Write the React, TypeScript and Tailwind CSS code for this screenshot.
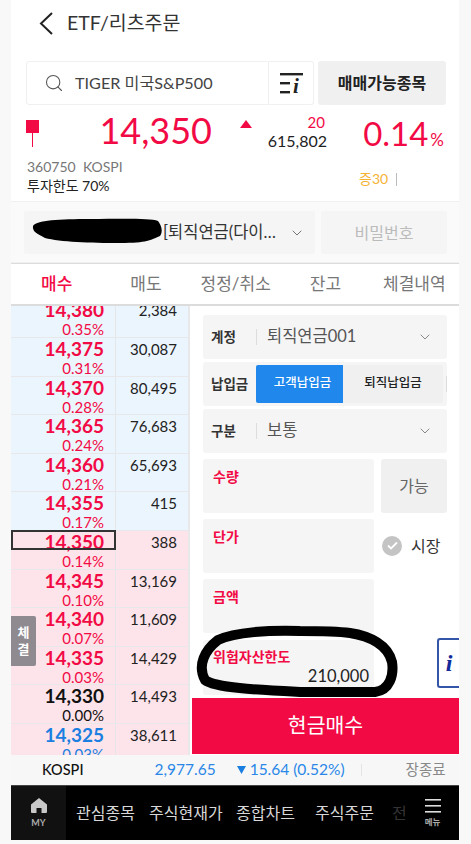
import React from "react";
import { ChevronDown, Search } from "lucide-react";

const FONT = "font-['Lato','Noto_Sans_CJK_KR',sans-serif]";

const rows = [
  { price: "14,380", pct: "0.35%", qty: "2,384", color: "text-[#f20a45]" },
  { price: "14,375", pct: "0.31%", qty: "30,087", color: "text-[#f20a45]" },
  { price: "14,370", pct: "0.28%", qty: "80,495", color: "text-[#f20a45]" },
  { price: "14,365", pct: "0.24%", qty: "76,683", color: "text-[#f20a45]" },
  { price: "14,360", pct: "0.21%", qty: "65,693", color: "text-[#f20a45]" },
  { price: "14,355", pct: "0.17%", qty: "415", color: "text-[#f20a45]" },
  { price: "14,350", pct: "0.14%", qty: "388", color: "text-[#f20a45]", current: true },
  { price: "14,345", pct: "0.10%", qty: "13,169", color: "text-[#f20a45]" },
  { price: "14,340", pct: "0.07%", qty: "11,609", color: "text-[#f20a45]" },
  { price: "14,335", pct: "0.03%", qty: "14,429", color: "text-[#f20a45]" },
  { price: "14,330", pct: "0.00%", qty: "14,493", color: "text-[#111]" },
  { price: "14,325", pct: "0.03%", qty: "38,611", color: "text-[#1a7fe0]" },
];

function OrderRow({ row, index }: { row: (typeof rows)[number]; index: number }) {
  const sell = index < 6;
  return (
    <div className={`relative flex h-[38.6px] shrink-0 border-b border-[#e8e8ea] ${sell ? "bg-[#ebf5fd]" : "bg-[#fde4ea]"}`}>
      <div className={`flex w-[105px] flex-col items-end border-r border-[#e4e6e8] pr-[11px] ${row.color}`}>
        <span className="text-[19px] font-bold leading-[21px]">{row.price}</span>
        <span className="mt-[1px] text-[15px] leading-[16px]">{row.pct}</span>
      </div>
      <div className="flex-1 pr-[11px] pt-[1px] text-right text-[15px] leading-[20px] text-[#222]">{row.qty}</div>
      {row.current && <div className="absolute left-0 top-[-1px] h-[20px] w-[105px] border-2 border-[#333]" />}
    </div>
  );
}

function SelectRow({ label, value }: { label: string; value: string }) {
  return (
    <div className="flex h-[43.5px] items-center rounded-[3px] bg-[#f5f5f5] pl-[8px] pr-[14px]">
      <span className="w-[45px] text-[13.5px] font-bold text-[#333]">{label}</span>
      <span className="h-[16px] w-px bg-[#ddd]" />
      <span className="ml-[10px] flex-1 text-[16.5px] text-[#555]">{value}</span>
      <ChevronDown className="h-[16px] w-[16px] text-[#888]" strokeWidth={1.5} />
    </div>
  );
}

function InputBox({ label, children }: { label: string; children?: React.ReactNode }) {
  return (
    <div className="flex h-[54px] w-[171px] flex-col rounded-[3px] bg-[#f5f5f5] px-[10px] pt-[9px]">
      <span className="text-[14px] font-bold leading-[18px] text-[#f20a45]">{label}</span>
      {children}
    </div>
  );
}

export default function App() {
  return (
    <div className={`${FONT} relative h-[844px] w-[471px] overflow-hidden bg-[#f8f8f8]`}>
      <div className="mx-[11px] flex h-[840px] w-[448px] flex-col bg-white">
        {/* header */}
        <div className="flex h-[46px] shrink-0 items-center pl-[28px]">
          <svg width="14" height="23" viewBox="0 0 14 23" fill="none" stroke="#222" strokeWidth="2">
            <path d="M13 1L2 11.500 13 22" />
          </svg>
          <span className="ml-[14px] text-[19.500px] text-[#333]">ETF/리츠주문</span>
        </div>

        {/* search */}
        <div className="mt-[15px] flex h-[44px] shrink-0 pl-[15px]">
          <div className="flex h-[44px] w-[243px] items-center rounded-l-[3px] border border-[#f0f0f0] pl-[17px]">
            <Search className="h-[20px] w-[20px] text-[#555]" strokeWidth={1.3} />
            <span className="ml-[11px] text-[16.2px] text-[#444]">TIGER 미국S&amp;P500</span>
          </div>
          <div className="flex h-[44px] w-[45px] items-center justify-center rounded-r-[3px] border border-l-0 border-[#f0f0f0]">
            <svg width="24" height="24" viewBox="0 0 24 24" fill="#222">
              <rect x="1" y="2" width="23" height="2.4" />
              <rect x="1" y="11" width="10" height="2.4" />
              <rect x="1" y="20" width="10" height="2.4" />
              <text x="14" y="22" fontFamily="Liberation Serif, serif" fontSize="21" fontWeight="bold" fontStyle="italic">i</text>
            </svg>
          </div>
          <div className="ml-[4px] flex h-[44px] w-[128px] items-center justify-center rounded-[3px] bg-[#f0f0f0] text-[16px] font-bold text-[#222]">
            매매가능종목
          </div>
        </div>

        {/* price */}
        <div className="relative h-[96px] shrink-0">
          <div className="absolute left-[15px] top-[15px] flex flex-col items-center">
            <div className="h-[13px] w-[13px] bg-[#f20a45]" />
            <div className="h-[14px] w-[1.5px] bg-[#f20a45]" />
          </div>
          <span className="absolute right-[247px] top-[3px] text-[36px] leading-[44px] text-[#f20a45]">14,350</span>
          <svg className="absolute left-[229px] top-[15px]" width="12" height="9" viewBox="0 0 12 9">
            <path d="M6 0l6 8H0z" fill="#f20a45" />
          </svg>
          <span className="absolute right-[134px] top-[8px] text-[15px] leading-[18px] text-[#f20a45]">20</span>
          <span className="absolute right-[132px] top-[26px] text-[16px] leading-[20px] text-[#222]">615,802</span>
          <span className="absolute right-[15px] top-[9px] flex items-baseline text-[#f20a45]">
            <span className="text-[33px] leading-[38px]">0.14</span>
            <span className="ml-[2px] text-[17px]">%</span>
          </span>
          <div className="absolute left-[16px] top-[53px] text-[14px] leading-[18px] text-[#777]">360750&nbsp; KOSPI</div>
          <div className="absolute left-[16px] top-[72px] text-[14px] leading-[18px] text-[#222]">투자한도 70%</div>
          <div className="absolute left-[348px] top-[65px] text-[14px] leading-[18px] text-[#f5b335]">증30</div>
          <div className="absolute left-[385px] top-[68px] h-[13px] w-px bg-[#bbb]" />
        </div>

        {/* account */}
        <div className="flex h-[62px] shrink-0 items-start gap-[6px] border-y border-[#f0f0f0] bg-[#fafafa] pl-[13px] pt-[9px]">
          <div className="flex h-[43px] w-[291px] items-center rounded-[3px] bg-[#f5f5f5] pr-[10px]">
            <span className="ml-[139px] flex-1 whitespace-nowrap text-[16.5px] text-[#333]">[퇴직연금(다이…</span>
            <ChevronDown className="h-[16px] w-[16px] text-[#777]" strokeWidth={1.5} />
          </div>
          <div className="flex h-[43px] w-[126px] items-center justify-center rounded-[3px] bg-[#f5f5f5] text-[16px] text-[#bbb]">
            비밀번호
          </div>
        </div>

        {/* tabs */}
        <div className="flex h-[43px] shrink-0 items-center border-y border-[#dcdcdc] border-b-2 text-[17px] text-[#777]">
          <span className="ml-[30px] font-medium text-[#f20a45]">매수</span>
          <span className="ml-[58px]">매도</span>
          <span className="ml-[39px]">정정/취소</span>
          <span className="ml-[39px]">잔고</span>
          <span className="ml-[42px]">체결내역</span>
        </div>

        {/* body */}
        <div className="relative flex h-[449px] shrink-0 overflow-hidden">
          <div className="-mt-[6.600px] flex w-[179px] shrink-0 flex-col border-r-2 border-[#e8e8ea]">
            {rows.map((row, index) => (
              <OrderRow key={row.price} row={row} index={index} />
            ))}
          </div>

          <div className="flex flex-1 flex-col">
            <div className="flex flex-col gap-[3.500px] pl-[13px] pr-[12px] pt-[9px]">
              <SelectRow label="계정" value="퇴직연금001" />
              <div className="flex h-[43.5px] items-center rounded-[3px] bg-[#f5f5f5] pl-[8px]">
                <span className="w-[45px] text-[13.5px] font-bold text-[#333]">납입금</span>
                <div className="flex h-[38px] w-[187px] overflow-hidden rounded-[2px] bg-[#f0f0f0] text-[12.5px]">
                  <span className="flex w-[87px] items-center justify-center bg-[#2088ec] pl-[6px] font-medium text-white">고객납입금</span>
                  <span className="flex flex-1 items-center justify-center font-medium text-[#222]">퇴직납입금</span>
                </div>
                <span className="ml-[3px] h-[16px] w-px bg-[#ddd]" />
              </div>
              <SelectRow label="구분" value="보통" />
            </div>

            <div className="mt-[6px] flex gap-[7px] pl-[13px]">
              <InputBox label="수량" />
              <div className="flex h-[54px] w-[66px] items-center justify-center rounded-[3px] bg-[#f0f0f0] text-[16px] text-[#666]">가능</div>
            </div>
            <div className="mt-[6px] flex items-center pl-[13px]">
              <InputBox label="단가" />
              <span className="ml-[8px] flex h-[20px] w-[20px] items-center justify-center rounded-full bg-[#c4c4c4]">
                <svg width="11" height="9" viewBox="0 0 11 9" fill="none" stroke="#fff" strokeWidth="1.8">
                  <path d="M1 4.500l3 3 6-6" />
                </svg>
              </span>
              <span className="ml-[9px] text-[16px] text-[#333]">시장</span>
            </div>
            <div className="mt-[6px] pl-[13px]">
              <InputBox label="금액" />
            </div>
            <div className="mt-[7px] pl-[13px]">
              <div className="flex h-[55px] w-[171px] flex-col rounded-[3px] bg-[#f5f5f5] pl-[10px] pr-[5px] pt-[8px]">
                <span className="text-[14px] font-bold leading-[18px] text-[#f20a45]">위험자산한도</span>
                <span className="text-right text-[16.5px] leading-[20px] text-[#222]">210,000</span>
              </div>
            </div>
            <div className="ml-[2px] mt-[3px] flex h-[56px] items-center justify-center bg-[#f20a45] text-[20.5px] text-white">현금매수</div>
          </div>

          <div className="absolute left-0 top-[310px] flex h-[50px] w-[25px] flex-col items-center justify-center rounded-r-[2px] bg-[#8f8a90] text-[13px] font-bold leading-[17px] text-white">
            <span>체</span>
            <span>결</span>
          </div>
          <div className="absolute right-0 top-[332px] flex h-[50px] w-[22px] items-center justify-center rounded-l-[3px] border-2 border-r-0 border-[#3456a8] bg-white font-['Liberation_Serif',serif] text-[24px] font-bold italic text-[#12299a]">
            i
          </div>
        </div>

        {/* index strip */}
        <div className="flex h-[30px] shrink-0 items-center bg-[#f7f7f7] text-[15.500px]">
          <span className="ml-[31px] text-[14.5px] font-medium text-[#111]">KOSPI</span>
          <span className="ml-[71px] text-[#2a87e8]">2,977.65</span>
          <svg className="ml-[21px]" width="9" height="8" viewBox="0 0 9 8">
            <path d="M0 0h9L4.500 8z" fill="#1a7fe0" />
          </svg>
          <span className="ml-[4px] text-[#2a87e8]">15.64 (0.52%)</span>
          <span className="ml-[16px] h-[12px] w-px bg-[#e4e4e4]" />
          <span className="ml-[44px] text-[14.5px] text-[#888]">장종료</span>
        </div>

        {/* bottom nav */}
        <div className="flex h-[55px] shrink-0 items-center border-t border-[#444] bg-black text-[16px] text-[#d8d8d8]">
          <div className="flex h-full w-[55px] shrink-0 flex-col items-center justify-center bg-[#111]">
            <svg width="18" height="17" viewBox="0 0 18 17" fill="#c8c8c8">
              <path d="M9 1L1 7.500V15a1 1 0 0 0 1 1h4.500v-5h5v5H16a1 1 0 0 0 1-1V7.500z" />
            </svg>
            <span className="mt-[3px] text-[9px] font-bold leading-[12px] text-[#aaa]">MY</span>
          </div>
          <span className="ml-[10px] w-[73px] whitespace-nowrap">관심종목</span>
          <span className="w-[87px] whitespace-nowrap">주식현재가</span>
          <span className="w-[79px] whitespace-nowrap">종합차트</span>
          <span className="w-[77px] whitespace-nowrap">주식주문</span>
          <span className="w-[20px] overflow-hidden whitespace-nowrap text-[#333]">전</span>
          <div className="flex h-full flex-1 flex-col items-center justify-center pr-[6px]">
            <svg width="16" height="14" viewBox="0 0 16 14" fill="#ddd">
              <rect width="16" height="1.600" />
              <rect y="6" width="16" height="1.600" />
              <rect y="12" width="16" height="1.600" />
            </svg>
            <span className="mt-[3px] text-[8.5px] font-bold leading-[12px] text-[#aaa]">메뉴</span>
          </div>
        </div>
      </div>

      {/* marker scribbles drawn over the screenshot */}
      <svg className="pointer-events-none absolute left-0 top-0" width="471" height="844" viewBox="0 0 471 844" fill="none">
        <path d="M33 226C36 220 60 219 90 219C120 219 150 218 158 221C162 226 163 232 160 236C150 240 148 243 120 243C90 243 60 242 45 238C38 234 32 232 33 226z" fill="#000" />
        <path d="M300 631C270 630 235 632 218 640C205 650 197 665 205 680C215 688 260 690 300 692L375 692C390 690 394 675 392 662C388 645 370 636 350 633C335 631 315 631 300 631z" stroke="#000" strokeWidth="10" />
      </svg>
    </div>
  );
}
